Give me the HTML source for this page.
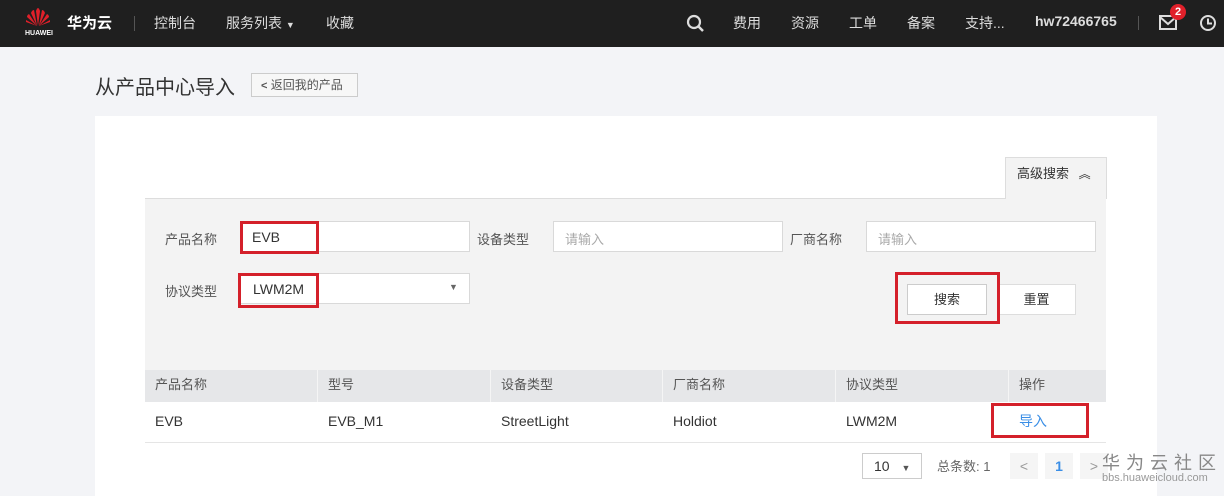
<!DOCTYPE html>
<html><head><meta charset="utf-8"><style>
*{box-sizing:border-box;margin:0;padding:0}
body{width:1224px;height:491px;overflow:hidden;background:#f3f4f7;font-family:"Liberation Sans","Noto Sans CJK SC",sans-serif;font-size:14px;color:#333;position:relative}
.a{position:absolute;white-space:nowrap}
.top{position:absolute;left:0;top:0;width:1224px;height:47px;background:#1f1f1f;color:#ddd}
.top .a{top:13px;font-size:14px;color:#ddd}
.inp{position:absolute;background:#fff;border:1px solid #d9d9d9;height:31px}
.ph{color:#aaa;font-size:13px}
.red{position:absolute;border:3px solid #d4202a}
.th{position:absolute;top:370px;height:32px;background:#e6e7e9;line-height:30px;padding-left:10px;font-size:13px;color:#555;border-right:1px solid #f5f5f5}
.td{position:absolute;top:402px;height:40px;line-height:38px;padding-left:10px;font-size:14px;color:#333}
</style></head><body>
<div class="top">
 <svg class="a" style="left:25px;top:7px" width="26" height="20" viewBox="0 0 26 20"><g fill="#e0202a"><path d="M13 19 L11 4 Q12 1 13 1 Q14 1 15 4Z"/><path d="M12 19 L6 6 Q7 3 9 3Z"/><path d="M14 19 L20 6 Q19 3 17 3Z"/><path d="M12 19 L2 10 Q2 8 4 7Z"/><path d="M14 19 L24 10 Q24 8 22 7Z"/><path d="M12 19 L1 15 Q1 13 1 13Z"/><path d="M14 19 L25 15 Q25 13 25 13Z"/></g></svg>
 <div class="a" style="left:25px;top:30px;font-size:7px;color:#fff;font-weight:bold">HUAWEI</div>
 <div class="a" style="left:67px;top:12px;font-size:15px;color:#fff;font-weight:bold">华为云</div>
 <div class="a" style="left:134px;top:16px;width:1px;height:15px;background:#555"></div>
 <div class="a" style="left:154px">控制台</div>
 <div class="a" style="left:226px">服务列表 <span style="font-size:9px">▼</span></div>
 <div class="a" style="left:326px">收藏</div>
 <svg class="a" style="left:686px;top:14px" width="19" height="19" viewBox="0 0 19 19"><circle cx="8" cy="8" r="6" fill="none" stroke="#ddd" stroke-width="2.2"/><path d="M12.5 12.5L17 17" stroke="#ddd" stroke-width="2.5"/></svg>
 <div class="a" style="left:733px">费用</div>
 <div class="a" style="left:791px">资源</div>
 <div class="a" style="left:849px">工单</div>
 <div class="a" style="left:907px">备案</div>
 <div class="a" style="left:965px">支持...</div>
 <div class="a" style="left:1035px;font-weight:bold">hw72466765</div>
 <div class="a" style="left:1138px;top:16px;width:1px;height:14px;background:#555"></div>
 <svg class="a" style="left:1159px;top:15px" width="18" height="15" viewBox="0 0 18 15"><rect x="1" y="1" width="16" height="13" fill="none" stroke="#ddd" stroke-width="2"/><path d="M1 2 L9 9 L17 2" fill="none" stroke="#ddd" stroke-width="2"/></svg>
 <div class="a" style="left:1170px;top:4px;width:16px;height:16px;border-radius:8px;background:#e0202a;color:#fff;font-size:11px;font-weight:bold;text-align:center;line-height:16px">2</div>
 <svg class="a" style="left:1199px;top:14px" width="18" height="18" viewBox="0 0 18 18"><circle cx="9" cy="9" r="7" fill="none" stroke="#ddd" stroke-width="2"/><path d="M9 4.5V9.5H13" fill="none" stroke="#ddd" stroke-width="2"/></svg>
</div>
<div class="a" style="left:95px;top:71px;font-size:20px;color:#333">从产品中心导入</div>
<div class="a" style="left:251px;top:73px;width:107px;height:24px;border:1px solid #ccc;background:#f7f7f7;font-size:12px;line-height:22px;padding-left:9px;color:#555"><span style="font-size:11px;font-weight:bold">&lt;</span> 返回我的产品</div>
<div class="a" style="left:95px;top:116px;width:1062px;height:380px;background:#fff"></div>
<div class="a" style="left:145px;top:198px;width:961px;height:1px;background:#ddd"></div>
<div class="a" style="left:1005px;top:157px;width:102px;height:42px;border:1px solid #ddd;border-bottom:none;background:#f3f3f3;font-size:13px;line-height:32px;padding-left:11px">高级搜索 <span style="font-size:12px;margin-left:6px">︽</span></div>
<div class="a" style="left:145px;top:199px;width:961px;height:171px;background:#f3f3f3"></div>
<div class="a" style="left:165px;top:229px;font-size:13px;color:#555">产品名称</div>
<div class="inp" style="left:240px;top:221px;width:230px"></div>
<div class="a" style="left:252px;top:229px;font-size:14px">EVB</div>
<div class="red" style="left:240px;top:221px;width:79px;height:33px"></div>
<div class="a" style="left:477px;top:229px;font-size:13px;color:#555">设备类型</div>
<div class="inp" style="left:553px;top:221px;width:230px"></div>
<div class="a ph" style="left:565px;top:229px">请输入</div>
<div class="a" style="left:790px;top:229px;font-size:13px;color:#555">厂商名称</div>
<div class="inp" style="left:866px;top:221px;width:230px"></div>
<div class="a ph" style="left:878px;top:229px">请输入</div>
<div class="a" style="left:165px;top:281px;font-size:13px;color:#555">协议类型</div>
<div class="inp" style="left:240px;top:273px;width:230px"></div>
<div class="a" style="left:253px;top:281px;font-size:14px">LWM2M</div>
<div class="a" style="left:449px;top:282px;font-size:9px;color:#666">▼</div>
<div class="red" style="left:238px;top:273px;width:81px;height:35px"></div>
<div class="a" style="left:907px;top:284px;width:80px;height:31px;border:1px solid #ccc;background:#fff;text-align:center;line-height:29px;font-size:13px">搜索</div>
<div class="a" style="left:997px;top:284px;width:79px;height:31px;border:1px solid #ddd;background:#fff;text-align:center;line-height:29px;font-size:13px">重置</div>
<div class="red" style="left:895px;top:272px;width:105px;height:52px"></div>
<div class="th" style="left:145px;width:173px">产品名称</div>
<div class="th" style="left:318px;width:173px">型号</div>
<div class="th" style="left:491px;width:172px">设备类型</div>
<div class="th" style="left:663px;width:173px">厂商名称</div>
<div class="th" style="left:836px;width:173px">协议类型</div>
<div class="th" style="left:1009px;width:97px;border:none">操作</div>
<div class="td" style="left:145px">EVB</div>
<div class="td" style="left:318px">EVB_M1</div>
<div class="td" style="left:491px">StreetLight</div>
<div class="td" style="left:663px">Holdiot</div>
<div class="td" style="left:836px">LWM2M</div>
<div class="td" style="left:1009px;color:#3a8ee6">导入</div>
<div class="red" style="left:991px;top:403px;width:98px;height:35px"></div>
<div class="a" style="left:145px;top:442px;width:961px;height:1px;background:#e5e5e5"></div>
<div class="a" style="left:862px;top:453px;width:60px;height:26px;border:1px solid #ccc;background:#fff;font-size:14px;line-height:24px;padding-left:11px">10 <span style="font-size:9px;margin-left:8px;color:#555">▼</span></div>
<div class="a" style="left:937px;top:456px;font-size:13px;color:#666">总条数: 1</div>
<div class="a" style="left:1010px;top:453px;width:28px;height:26px;background:#f5f5f5;text-align:center;line-height:26px;color:#999">&lt;</div>
<div class="a" style="left:1045px;top:453px;width:28px;height:26px;background:#f5f5f5;text-align:center;line-height:26px;color:#3a8ee6;font-weight:bold">1</div>
<div class="a" style="left:1080px;top:453px;width:28px;height:26px;background:#f5f5f5;text-align:center;line-height:26px;color:#999">&gt;</div>
<div class="a" style="left:1102px;top:449px;font-size:18px;color:#888;letter-spacing:6px">华为云社区</div>
<div class="a" style="left:1102px;top:472px;font-size:11px;color:#999">bbs.huaweicloud.com</div>
</body></html>
